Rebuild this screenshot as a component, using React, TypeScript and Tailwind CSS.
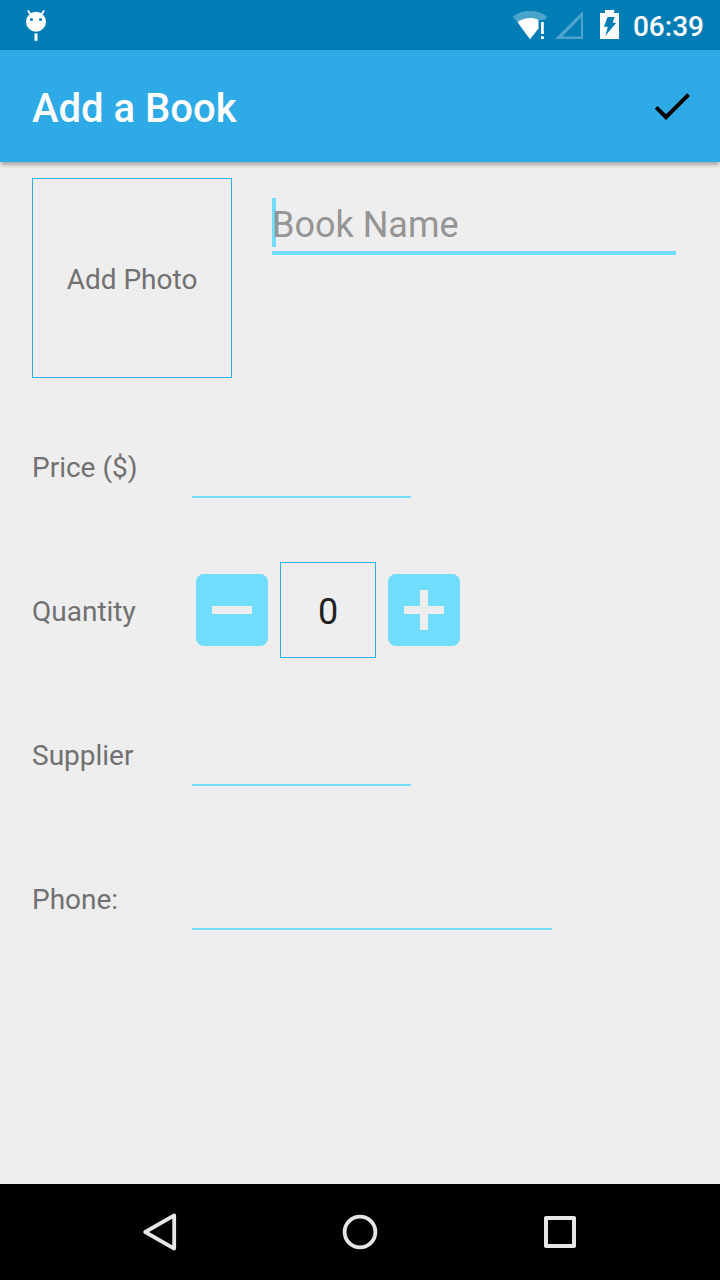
import { useState } from "react";

function StatusBar() {
  return (
    <div className="flex h-[50px] shrink-0 items-center justify-between bg-[#007db5] pr-4 pl-6 text-white">
      <svg width="24" height="50" viewBox="24 0 24 50" aria-hidden="true">
        <path d="M28.200 11l3 4M43.800 11l-3 4" stroke="#fff" strokeWidth="1.8" strokeLinecap="round" />
        <circle cx="36" cy="21.8" r="10" fill="#fff" />
        <circle cx="31.500" cy="19.400" r="1.500" fill="#007db5" />
        <circle cx="40.500" cy="19.400" r="1.500" fill="#007db5" />
        <rect x="34.500" y="33.400" width="3" height="7.400" fill="#fff" />
      </svg>
      <div className="flex items-center">
        <svg width="121" height="50" viewBox="512 0 121 50" aria-hidden="true">
          <path d="M512.800 16.800C517 13 523.500 11 530 11s13 2 17.200 5.800L544.800 20H538.500C536 18.600 533 18 530 18c-4.500 0-9 1.400-12.500 4.200z" fill="#fff" fillOpacity=".3" />
          <path d="M517.500 22.200C521 19.400 525.500 18 530 18c3 0 6 .6 8.500 2V28.500L530 39.300z" fill="#fff" />
          <path d="M541 22h2.800v12H541zM541 36.200h2.800v2.800H541z" fill="#fff" />
          <path d="M583 11v28h-28zM581 17.500L562.500 36.500H581z" fill="#fff" fillOpacity=".3" fillRule="evenodd" />
          <path d="M605 10h9.200v3H619v26h-19V13h5z" fill="#fff" />
          <path d="M607.500 17h7.200l-2.200 5.800h3.700L605.200 36l2.600-9.300h-3.900z" fill="#007db5" />
        </svg>
        <time className="pt-1 text-[28px] leading-8 font-medium">06:39</time>
      </div>
    </div>
  );
}

function Label({ htmlFor, children }: { htmlFor: string; children: string }) {
  return (
    <label htmlFor={htmlFor} className="w-40 shrink-0 pt-1 text-[28px] leading-8 text-[#717171]">
      {children}
    </label>
  );
}

function Field({ id, label, type, width }: { id: string; label: string; type: string; width: string }) {
  return (
    <div className="flex h-36 items-center">
      <Label htmlFor={id}>{label}</Label>
      <input
        id={id}
        type={type}
        className={`h-16 min-w-0 border-b-2 border-[#72ddff] bg-transparent text-4xl text-[#212121] outline-none ${width}`}
      />
    </div>
  );
}

export default function App() {
  const [quantity, setQuantity] = useState(0);
  return (
    <div className="flex min-h-screen flex-col bg-[#eeeeee] font-['Roboto',sans-serif]">
      <StatusBar />
      <header className="flex h-28 shrink-0 items-center justify-between bg-[#2eabe6] pr-6 pl-8 shadow-[0_4px_4px_-1px_rgba(0,0,0,0.3)]">
        <h1 className="pt-1.5 text-[40px] leading-12 font-medium text-white">Add a Book</h1>
        <button type="submit" form="book" aria-label="Save book">
          <svg width="48" height="48" viewBox="0 0 24 24" aria-hidden="true">
            <path d="M9 16.170L4.830 12l-1.420 1.410L9 19 21 7l-1.410-1.410z" fill="#000" />
          </svg>
        </button>
      </header>

      <form id="book" className="flex grow flex-col px-8 pt-4" onSubmit={(e) => e.preventDefault()}>
        <div className="mb-4 flex items-start">
          <button type="button" className="size-[200px] shrink-0 border border-[#2eabe6] pt-1 text-[28px] leading-8 text-[#717171]">
            Add Photo
          </button>
          <div className="relative mt-5 mr-3 ml-10 grow">
            <span className="absolute top-0 left-0 h-[49px] w-1 bg-[#72ddff]" />
            <input
              type="text"
              aria-label="Book Name"
              placeholder="Book Name"
              className="relative block h-[57px] w-full border-b-4 border-[#72ddff] bg-transparent text-4xl text-[#212121] outline-none placeholder:text-[#959595]"
            />
          </div>
        </div>

        <Field id="price" label="Price ($)" type="text" width="w-[219px]" />

        <div className="flex h-36 items-center">
          <Label htmlFor="quantity">Quantity</Label>
          <div className="flex items-center gap-3 pl-1">
            <button
              type="button"
              aria-label="Decrease quantity"
              onClick={() => setQuantity(Math.max(0, quantity - 1))}
              className="size-[72px] rounded-lg bg-[#72ddff]"
            >
              <svg width="72" height="72" viewBox="0 0 72 72" aria-hidden="true">
                <path d="M16 32h40v8H16z" fill="#eee" />
              </svg>
            </button>
            <input
              id="quantity"
              type="text"
              inputMode="numeric"
              value={quantity}
              onChange={(e) => setQuantity(Number(e.target.value) || 0)}
              className="size-24 border border-[#2eabe6] bg-transparent pt-1 text-center text-4xl text-[#212121] outline-none"
            />
            <button
              type="button"
              aria-label="Increase quantity"
              onClick={() => setQuantity(quantity + 1)}
              className="size-[72px] rounded-lg bg-[#72ddff]"
            >
              <svg width="72" height="72" viewBox="0 0 72 72" aria-hidden="true">
                <path d="M16 32h16V16h8v16h16v8H40v16h-8V40H16z" fill="#eee" />
              </svg>
            </button>
          </div>
        </div>

        <Field id="supplier" label="Supplier" type="text" width="w-[219px]" />
        <Field id="phone" label="Phone:" type="tel" width="w-[360px]" />
      </form>

      <nav className="flex h-24 shrink-0 items-center justify-center gap-[152px] bg-black">
        <button type="button" aria-label="Back">
          <svg width="48" height="48" viewBox="0 0 48 48" fill="none" stroke="#e6e6e6" strokeWidth="3.800" strokeLinejoin="round" aria-hidden="true">
            <path d="M38.200 7.400v33.200L9.200 24z" />
          </svg>
        </button>
        <button type="button" aria-label="Home">
          <svg width="48" height="48" viewBox="0 0 48 48" fill="none" stroke="#e6e6e6" strokeWidth="3.800" aria-hidden="true">
            <circle cx="24" cy="24" r="15.400" />
          </svg>
        </button>
        <button type="button" aria-label="Recent apps">
          <svg width="48" height="48" viewBox="0 0 48 48" fill="none" stroke="#e6e6e6" strokeWidth="4" strokeLinejoin="round" aria-hidden="true">
            <path d="M10 10h28v28H10z" />
          </svg>
        </button>
      </nav>
    </div>
  );
}
